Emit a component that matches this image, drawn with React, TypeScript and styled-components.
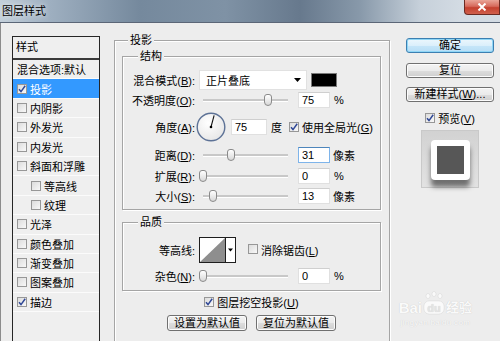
import styled, { createGlobalStyle } from "styled-components";

const GlobalStyle = createGlobalStyle`
	html, body {
		margin: 0;
		padding: 0;
	}
	body {
		width: 500px;
		height: 341px;
		overflow: hidden;
		background: #ededed;
		font-family: "Liberation Sans", "Noto Sans CJK SC", sans-serif;
		font-size: 11px;
		color: #000;
	}
	* {
		box-sizing: border-box;
	}
`;

const TitleBar = styled.div`
	height: 23px;
	display: flex;
	justify-content: space-between;
	align-items: flex-start;
	border-bottom: 1px solid #5b6677;
	background: linear-gradient(
		90deg,
		#c3cfda 0%,
		#9eafc0 10%,
		#75899d 28%,
		#7f92a5 45%,
		#67798d 60%,
		#8899aa 72%,
		#c6d0da 84%,
		#d3dbe3 92%
	);
`;

const Title = styled.div`
	padding-left: 2px;
	line-height: 22px;
	font-size: 11px;
	text-shadow: 0 0 5px rgba(255, 255, 255, 0.9);
`;

const CloseButton = styled.div`
	width: 36px;
	height: 15px;
	display: flex;
	align-items: center;
	justify-content: center;
	border: 1px solid #6b2a22;
	border-top: none;
	border-radius: 0 0 0 4px;
	background: linear-gradient(#e9a497 0%, #d66a5c 45%, #c4402f 55%, #d0604c 100%);
`;

const Body = styled.div`
	position: relative;
	height: 318px;
	display: flex;
	align-items: flex-start;
	padding-left: 11px;
	border-left: 1px solid #8c8c8c;
	overflow: hidden;
`;

// left list
const StyleList = styled.div`
	margin-top: 13px;
	width: 88px;
	height: 320px;
	flex-shrink: 0;
	border: 1px solid #262626;
	border-bottom: none;
	background: #efefef;
`;

const ListHeader = styled.div`
	height: 23px;
	padding-left: 3px;
	line-height: 21px;
	border-bottom: 2px solid #3a3a3a;
`;

const ListRow = styled.div<{ $active?: boolean; $indent?: boolean }>`
	height: 19.4px;
	display: flex;
	align-items: center;
	gap: 3px;
	padding-left: ${(p) => (p.$indent ? 18 : 4)}px;
	border-bottom: 1px solid #fbfbfb;
	background: ${(p) => (p.$active ? "#3399ff" : "transparent")};
	color: ${(p) => (p.$active ? "#fff" : "#000")};
	white-space: nowrap;
`;

// checkbox
const Box = styled.span`
	width: 10px;
	height: 10px;
	flex-shrink: 0;
	display: inline-flex;
	align-items: center;
	justify-content: center;
	border: 1px solid #979797;
	background: linear-gradient(135deg, #dcdcdc, #f8f8f8);
`;

const Check = ({ on }: { on?: boolean }) => (
	<Box>
		{on && (
			<svg width="8" height="8" viewBox="0 0 8 8">
				<path
					d="M1 4.3 L3 6.6 L7.2 0.8"
					fill="none"
					stroke="#2f4796"
					strokeWidth="1.5"
				/>
			</svg>
		)}
	</Box>
);

// middle
const Main = styled.div`
	margin-left: 14px;
	margin-top: 17px;
	width: 276px;
	flex-shrink: 0;
`;

const Group = styled.div<{ $pad: string; $mt?: number }>`
	margin-top: ${(p) => p.$mt ?? 0}px;
	border: 1px solid #a5a5a5;
	box-shadow: inset 1px 1px 0 #fff, 1px 1px 0 #fff;
	padding: ${(p) => p.$pad};
`;

const GroupTitle = styled.div<{ $ml: number; $mb: number }>`
	display: table;
	margin: -9px 0 ${(p) => p.$mb}px ${(p) => p.$ml}px;
	padding: 0 2px;
	line-height: 16px;
	background: #ededed;
`;

const Row = styled.div<{ $h: number; $mt?: number }>`
	height: ${(p) => p.$h}px;
	margin-top: ${(p) => p.$mt ?? 0}px;
	display: flex;
	align-items: center;
	white-space: nowrap;
`;

const Label = styled.span`
	width: 68px;
	flex-shrink: 0;
	text-align: right;
`;

const Hot = styled.u`
	text-underline-offset: 1px;
`;

const Select = styled.div`
	width: 108px;
	height: 20px;
	margin-left: 4px;
	display: flex;
	align-items: center;
	justify-content: space-between;
	padding: 0 5px 0 6px;
	background: #fff;
	border: 1px solid #e1e1e1;
`;

const Swatch = styled.div`
	width: 26px;
	height: 14px;
	margin-left: 4px;
	background: #000;
	border: 1px solid #7a7a7a;
`;

const Slider = styled.div`
	position: relative;
	width: 95px;
	height: 14px;
	margin-left: 4px;
	flex-shrink: 0;
`;

const Track = styled.div`
	position: absolute;
	left: 4px;
	right: 6px;
	top: 6px;
	height: 3px;
	background: #c8c8c8;
	border-bottom: 1px solid #fff;
`;

const Thumb = styled.div`
	position: absolute;
	top: 1px;
	width: 8px;
	height: 12px;
	margin-left: -4px;
	border: 1px solid #8a8a8a;
	border-radius: 3px 3px 4px 4px;
	background: linear-gradient(#ffffff, #d8d8d8);
`;

const NumField = styled.input<{ $w: number; $ml: number; $focus?: boolean }>`
	width: ${(p) => p.$w}px;
	height: 16px;
	margin: 0 0 0 ${(p) => p.$ml}px;
	padding: 0 0 0 3px;
	border: 1px solid ${(p) => (p.$focus ? "#7eb4ea" : "#e0e0e0")};
	border-top-color: ${(p) => (p.$focus ? "#4d85bb" : "#cfcfcf")};
	background: #fff;
	font: 11px "Liberation Sans", sans-serif;
	color: #000;
	outline: none;
`;

const Unit = styled.span<{ $ml: number }>`
	margin-left: ${(p) => p.$ml}px;
`;

const Contour = styled.div`
	width: 37px;
	height: 26px;
	margin-left: 4px;
	display: flex;
	border: 1px solid #1e1e1e;
	background: #fff;
`;

const ContourArrow = styled.div`
	width: 10px;
	display: flex;
	align-items: center;
	justify-content: center;
	border-left: 1px solid #1e1e1e;
`;

const CenterRow = styled.div<{ $mt: number; $gap?: number }>`
	margin-top: ${(p) => p.$mt}px;
	display: flex;
	justify-content: center;
	align-items: center;
	gap: ${(p) => p.$gap ?? 3}px;
	white-space: nowrap;
`;

const Button = styled.button<{ $w?: number; $h?: number; $default?: boolean }>`
	width: ${(p) => p.$w ?? 88}px;
	height: ${(p) => p.$h ?? 15}px;
	padding: 0;
	font: 11px "Liberation Sans", "Noto Sans CJK SC", sans-serif;
	line-height: 1;
	color: #000;
	border: 1px solid ${(p) => (p.$default ? "#3c7fb1" : "#707070")};
	border-radius: 3px;
	background: ${(p) =>
		p.$default
			? "linear-gradient(#ecf7fd 0%, #dbeffb 50%, #c6e6f9 51%, #b8def6 100%)"
			: "linear-gradient(#f3f3f3 0%, #ebebeb 50%, #dddddd 51%, #cfcfcf 100%)"};
	box-shadow: inset 0 0 0 1px ${(p) => (p.$default ? "#8fd6f6" : "#fcfcfc")};
`;

// right
const Side = styled.div`
	margin-left: 16px;
	margin-top: 15px;
	width: 88px;
	display: flex;
	flex-direction: column;
	gap: 9.5px;
`;

const PreviewToggle = styled.div`
	margin-top: -2px;
	display: flex;
	justify-content: center;
	align-items: center;
	gap: 3px;
`;

const Preview = styled.div`
	width: 58px;
	height: 58px;
	margin-top: -5px;
	align-self: center;
	display: flex;
	justify-content: center;
	padding-top: 9px;
	background: linear-gradient(#d2d2d2, #e2e2e2);
	border: 1px solid #c9c9c9;
`;

const PreviewTile = styled.div`
	width: 39px;
	height: 40px;
	padding: 6px;
	border-radius: 4px;
	background: #fff;
	box-shadow: 0 7px 5px rgba(0, 0, 0, 0.5);
`;

const PreviewFill = styled.div`
	width: 100%;
	height: 100%;
	background: #575757;
`;

// watermark over the corner
const Watermark = styled.div`
	position: absolute;
	right: 28px;
	bottom: 14px;
	display: flex;
	flex-direction: column;
	align-items: center;
	color: #fafafa;
	text-shadow: 0 0 1px rgba(0, 0, 0, 0.18);
	pointer-events: none;
`;

const MarkLine = styled.div`
	display: flex;
	align-items: flex-end;
	gap: 1px;
	font-weight: bold;
	font-size: 15px;
	line-height: 15px;
`;

const MarkSmall = styled.div`
	font-size: 8px;
	margin-top: 3px;
	letter-spacing: 0.3px;
`;

const styleItems = [
	{ name: "投影", on: true, active: true },
	{ name: "内阴影" },
	{ name: "外发光" },
	{ name: "内发光" },
	{ name: "斜面和浮雕" },
	{ name: "等高线", indent: true },
	{ name: "纹理", indent: true },
	{ name: "光泽" },
	{ name: "颜色叠加" },
	{ name: "渐变叠加" },
	{ name: "图案叠加" },
	{ name: "描边", on: true },
];

const Range = ({ pct }: { pct: number }) => (
	<Slider>
		<Track />
		<Thumb style={{ left: 4 + pct * 85 }} />
	</Slider>
);

const Dial = ({ angle }: { angle: number }) => {
	const r = (angle * Math.PI) / 180;
	const x = 15 + Math.cos(r) * 12;
	const y = 15 - Math.sin(r) * 12;
	return (
		<svg width="30" height="30" viewBox="0 0 30 30" style={{ marginLeft: 1 }}>
			<defs>
				<radialGradient id="dialFill" cx="40%" cy="35%" r="70%">
					<stop offset="0" stopColor="#ffffff" />
					<stop offset="1" stopColor="#e6e6e6" />
				</radialGradient>
			</defs>
			<circle cx="15" cy="15" r="13.8" fill="url(#dialFill)" stroke="#5d7296" strokeWidth="1.4" />
			<line x1="15" y1="15" x2={x} y2={y} stroke="#111" strokeWidth="1.1" />
			<circle cx="15" cy="15" r="1.3" fill="#000" />
		</svg>
	);
};

const DownArrow = ({ w = 7 }: { w?: number }) => (
	<svg width={w} height="4" viewBox="0 0 7 4">
		<path d="M0 0 H7 L3.5 4 Z" fill="#000" />
	</svg>
);

const App = () => {
	return (
		<>
			<GlobalStyle />
			<TitleBar>
				<Title>图层样式</Title>
				<CloseButton>
					<svg width="10" height="8" viewBox="0 0 10 8">
						<path d="M1.5 0.5 L8.5 7.5 M8.5 0.5 L1.5 7.5" stroke="#fff" strokeWidth="2" />
					</svg>
				</CloseButton>
			</TitleBar>
			<Body>
				<StyleList>
					<ListHeader>样式</ListHeader>
					<ListRow>混合选项:默认</ListRow>
					{styleItems.map((item) => (
						<ListRow key={item.name} $active={item.active} $indent={item.indent}>
							<Check on={item.on} />
							{item.name}
						</ListRow>
					))}
				</StyleList>

				<Main>
					<Group $pad="0 8px 20px 7px">
						<GroupTitle $ml={6} $mb={8}>投影</GroupTitle>
						<Group $pad="0 4px 3px 4px">
							<GroupTitle $ml={11} $mb={6}>结构</GroupTitle>
							<Row $h={20}>
								<Label>
									混合模式(<Hot>B</Hot>):
								</Label>
								<Select>
									<span>正片叠底</span>
									<DownArrow />
								</Select>
								<Swatch />
							</Row>
							<Row $h={20}>
								<Label>
									不透明度(<Hot>O</Hot>):
								</Label>
								<Range pct={0.765} />
								<NumField $w={32} $ml={4} value="75" readOnly />
								<Unit $ml={4}>%</Unit>
							</Row>
							<Row $h={34}>
								<Label>
									角度(<Hot>A</Hot>):
								</Label>
								<Dial angle={75} />
								<NumField $w={36} $ml={5} value="75" readOnly />
								<Unit $ml={4}>度</Unit>
								<Unit $ml={7}>
									<Check on />
								</Unit>
								<Unit $ml={3}>
									使用全局光(<Hot>G</Hot>)
								</Unit>
							</Row>
							<Row $h={22}>
								<Label>
									距离(<Hot>D</Hot>):
								</Label>
								<Range pct={0.33} />
								<NumField $w={32} $ml={4} value="31" readOnly $focus />
								<Unit $ml={3}>像素</Unit>
							</Row>
							<Row $h={20}>
								<Label>
									扩展(<Hot>R</Hot>):
								</Label>
								<Range pct={0} />
								<NumField $w={32} $ml={4} value="0" readOnly />
								<Unit $ml={4}>%</Unit>
							</Row>
							<Row $h={20}>
								<Label>
									大小(<Hot>S</Hot>):
								</Label>
								<Range pct={0.118} />
								<NumField $w={32} $ml={4} value="13" readOnly />
								<Unit $ml={3}>像素</Unit>
							</Row>
						</Group>

						<Group $pad="0 4px 4px 4px" $mt={12}>
							<GroupTitle $ml={11} $mb={5}>品质</GroupTitle>
							<Row $h={30}>
								<Label>等高线:</Label>
								<Contour>
									<svg width="25" height="24" viewBox="0 0 25 24">
										<path d="M0 24 L25 0 V24 Z" fill="#8e8e8e" />
									</svg>
									<ContourArrow>
										<DownArrow w={5} />
									</ContourArrow>
								</Contour>
								<Unit $ml={12}>
									<Check />
								</Unit>
								<Unit $ml={3}>
									消除锯齿(<Hot>L</Hot>)
								</Unit>
							</Row>
							<Row $h={20} $mt={1}>
								<Label>
									杂色(<Hot>N</Hot>):
								</Label>
								<Range pct={0} />
								<NumField $w={32} $ml={4} value="0" readOnly />
								<Unit $ml={4}>%</Unit>
							</Row>
						</Group>

						<CenterRow $mt={3}>
							<Check on />
							<span>
								图层挖空投影(<Hot>U</Hot>)
							</span>
						</CenterRow>
						<CenterRow $mt={5} $gap={9}>
							<Button $w={80} $h={16}>设置为默认值</Button>
							<Button $w={80} $h={16}>复位为默认值</Button>
						</CenterRow>
					</Group>
				</Main>

				<Side>
					<Button $default>确定</Button>
					<Button>复位</Button>
					<Button>
						新建样式(<Hot>W</Hot>)...
					</Button>
					<PreviewToggle>
						<Check on />
						<span>
							预览(<Hot>V</Hot>)
						</span>
					</PreviewToggle>
					<Preview>
						<PreviewTile>
							<PreviewFill />
						</PreviewTile>
					</Preview>
				</Side>

				<Watermark>
					<MarkLine>
						<span>Bai</span>
						<svg width="22" height="24" viewBox="0 0 22 24">
							<g fill="#fafafa" stroke="rgba(0,0,0,0.12)" strokeWidth="0.5">
								<ellipse cx="5" cy="5" rx="2" ry="2.5" />
								<ellipse cx="11" cy="3" rx="2" ry="2.5" />
								<ellipse cx="17" cy="5" rx="2" ry="2.5" />
								<rect x="1" y="10" width="20" height="13" rx="5" />
							</g>
							<text x="11" y="21" textAnchor="middle" fontSize="11" fontWeight="bold" fill="#e4e4e4" fontFamily="Liberation Sans, sans-serif">
								du
							</text>
						</svg>
						<span style={{ fontSize: 13 }}>经验</span>
					</MarkLine>
					<MarkSmall>jingyan.baidu.com</MarkSmall>
				</Watermark>
			</Body>
		</>
	);
};

export default App;
